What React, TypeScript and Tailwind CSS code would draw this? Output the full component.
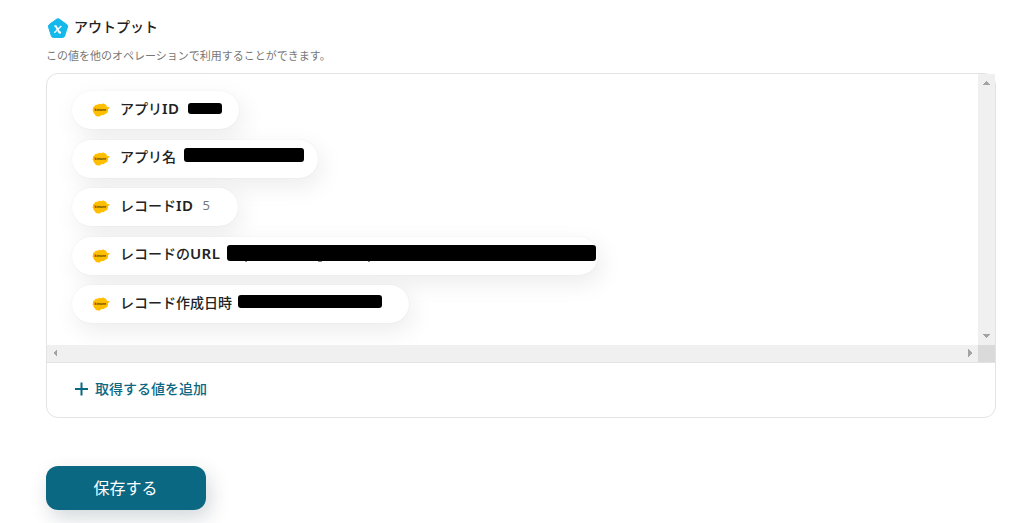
import type { ReactNode } from 'react';

function KintoneIcon() {
    return (
        <svg width="18" height="14" viewBox="0 0 18 14" className="shrink-0">
            <path
                d="M2.500 3.200 C3 1.400 4.800 1.700 5.800 1.700 C6.800 .3 8.200 .9 9 1.300 C10.500 .3 12 .5 12.800 1.200 C14 1.400 14.800 2.600 14.900 4 L18 4.300 L15.900 6.500 C16.600 8.700 15 10.800 13 11 C12 12.400 10 12.200 9.200 12 C8.500 13.500 6.500 13.800 5.200 13.200 C3.700 13.500 2.900 12.200 3.100 11.200 C1.800 11 1.400 9.800 1.600 9 C.4 8.200 .3 6.800 1 6 C.6 4.800 1.400 3.600 2.500 3.200 Z"
                fill="#ffbf00"
            />
            <text x="2.600" y="8.100" fontSize="2.600" fontWeight="700" textLength="11.500" lengthAdjust="spacingAndGlyphs" fontFamily="Liberation Sans, sans-serif" fill="#3a2a00">
                kintone
            </text>
        </svg>
    );
}

function Pill({ label, latin, className, children }: { label: string; latin?: string; className: string; children: ReactNode }) {
    return (
        <div
            className={`flex h-[38px] shrink-0 items-center rounded-full bg-white pl-5 shadow-[4px_8px_24px_rgba(0,0,0,0.08),0_0_2px_rgba(0,0,0,0.06)] ${className}`}
        >
            <KintoneIcon />
            <span className="ml-2.5 -mt-[3px] text-sm font-medium whitespace-nowrap text-[#222]">
                {label}
                {latin && <span className="text-[15px] leading-none font-semibold tracking-[0.4px]">{latin}</span>}
            </span>
            {children}
        </div>
    );
}

function Arrow({ points }: { points: string }) {
    return (
        <svg width="8" height="8" viewBox="0 0 8 8" shapeRendering="crispEdges">
            <polygon points={points} fill="#a3a3a3" />
        </svg>
    );
}

function App() {
    return (
        <div className="h-[523px] overflow-hidden bg-white pt-[17px] pl-[46px] font-['Noto_Sans','Noto_Sans_CJK_JP',sans-serif]">
            <div className="flex h-[22px] items-center">
                <svg width="24" height="22" viewBox="0 0 24 22">
                    <path
                        d="M10.800 2.100 Q12 1.300 13.200 2.100 L20.800 7.600 Q22 8.500 21.500 9.900 L18.700 18.800 Q18.200 20.500 16.500 20.500 H7.500 Q5.800 20.500 5.300 18.800 L2.500 9.900 Q2 8.500 3.200 7.600 Z"
                        fill="#14b9eb"
                        stroke="#14b9eb"
                        strokeWidth="1"
                    />
                    <path d="M8.400 9.200 H9.800 L13.400 15.500 H15" fill="none" stroke="#fff" strokeWidth="1.800" />
                    <path d="M15.300 9 L8.300 15.800" fill="none" stroke="#fff" strokeWidth="1.400" />
                </svg>
                <h2 className="-mt-0.5 ml-1 text-sm font-medium text-[#222]">アウトプット</h2>
            </div>
            <p className="mt-[7px] h-5 text-[11px] leading-5 text-[#777]">この値を他のオペレーションで利用することができます。</p>

            <div className="mt-[7px] h-[345px] w-[950px] rounded-xl border border-[#e3e3e3]">
                <div className="flex h-[271px]">
                    <div className="flex flex-1 flex-col gap-[10.5px] overflow-hidden rounded-tl-xl pt-[17px] pl-[25px]">
                        <Pill label="アプリ" latin="ID" className="w-[167px]">
                            <span className="-mt-[3px] ml-auto mr-[17px] h-[11px] w-[34px] rounded-[3px] bg-black" />
                        </Pill>
                        <Pill label="アプリ名" className="w-[246px]">
                            <span className="-mt-[8px] ml-auto mr-3.5 h-3.5 w-[120px] rounded-[3px] bg-black" />
                        </Pill>
                        <Pill label="レコード" latin="ID" className="w-[166px]">
                            <span className="-mt-[3px] ml-auto mr-7 text-[13px] text-[#777]">5</span>
                        </Pill>
                        <Pill label="レコードの" latin="URL" className="w-[526px]">
                            <span className="-mt-[6px] ml-auto mr-0.5 h-4 w-[369px] rounded-[3px] bg-black">
                                <span className="mt-4 flex pl-[18px]">
                                    <span className="h-px w-0.5 bg-[#888]" />
                                    <span className="ml-[71px] h-px w-1 bg-[#888]" />
                                    <span className="ml-[46px] h-px w-0.5 bg-[#888]" />
                                </span>
                            </span>
                        </Pill>
                        <Pill label="レコード作成日時" className="w-[337px]">
                            <span className="-mt-[5px] ml-auto mr-[27px] h-[13px] w-36 rounded-[3px] bg-black" />
                        </Pill>
                    </div>
                    <div className="flex w-[17px] flex-col items-start justify-between bg-[#f0f0f0] py-[5px] pl-1">
                        <Arrow points="0,6 4,2 8,6" />
                        <Arrow points="0,2 8,2 4,6" />
                    </div>
                </div>
                <div className="flex h-[18px] border-b border-[#e3e3e3]">
                    <div className="flex flex-1 items-start justify-between bg-[#f0f0f0] px-1 pt-1">
                        <Arrow points="6,0 6,8 2,4" />
                        <Arrow points="2,0 6,4 2,8" />
                    </div>
                    <div className="w-[17px] bg-[#dadada]" />
                </div>
                <button className="flex h-[51px] items-center pl-7 text-sm font-medium text-[#0b6882]">
                    <svg width="14" height="14" viewBox="0 0 14 14" className="mr-1.5">
                        <path d="M6.500 .5 V13.500 M0 7 H13" stroke="#0b6882" strokeWidth="2" />
                    </svg>
                    取得する値を追加
                </button>
            </div>

            <button className="mt-12 flex h-11 w-40 items-center justify-center rounded-xl bg-[#0b6882] pr-px text-base text-white shadow-[4px_8px_20px_rgba(11,40,55,0.18)]">
                保存する
            </button>
        </div>
    );
}

export default App;
